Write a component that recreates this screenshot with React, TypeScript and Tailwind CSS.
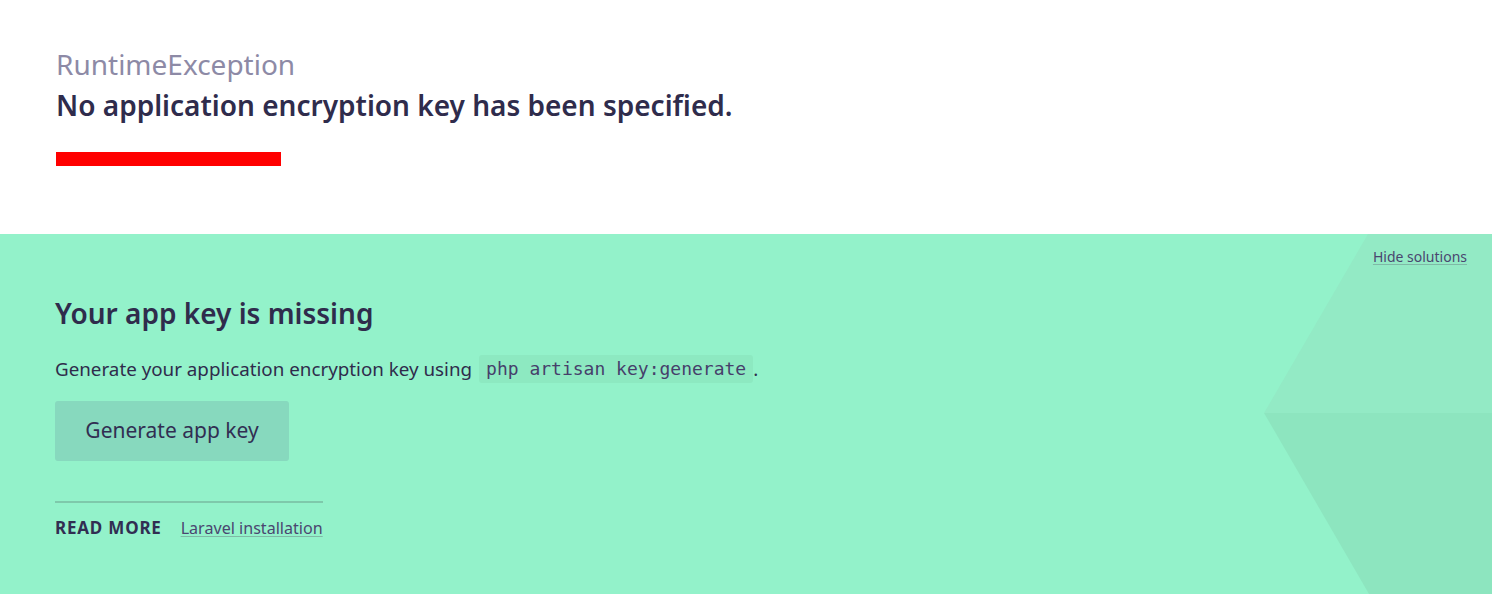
import React from 'react';

const sans = 'font-["Noto_Sans","Open_Sans",sans-serif]';

function Decoration() {
  // background facets on the right edge of the solution panel
  return (
    <svg
      className="absolute right-0 top-0 h-full"
      width="228"
      height="360"
      viewBox="0 0 228 360"
      preserveAspectRatio="none"
    >
      <polygon points="104,0 228,0 228,179 0,179" fill="#93eac5" />
      <polygon points="0,179 228,179 228,360 105,360" fill="#8de5bf" />
    </svg>
  );
}

export default function App() {
  return (
    <div className={`${sans} min-h-[594px] w-full bg-white`}>
      <header className="h-[234px] px-14 pt-[46px]">
        <p className="text-[28px] leading-[36px] text-[#8d8aa6]">RuntimeException</p>
        <h1 className="text-[28px] leading-[46px] font-semibold text-[#2f2c4c]">
          No application encryption key has been specified.
        </h1>
        <div className="mt-[24px] h-[14px] w-[225px] bg-[#ff0000]" />
      </header>

      <section className="relative h-[360px] overflow-hidden bg-[#93f2ca]">
        <Decoration />
        <a className="absolute right-[25px] top-[12px] text-[14px] text-[#4a4670] underline decoration-[#7fb9a6] underline-offset-2">
          Hide solutions
        </a>

        <div className="relative px-[55px] pt-[60px]">
          <h2 className="text-[28px] leading-[38px] font-semibold text-[#2f2c4c]">Your app key is missing</h2>
          <p className="mt-[23px] flex items-center text-[18.8px] text-[#2f2c4c]">
            Generate your application encryption key using
            <code className='ml-[7px] rounded-[3px] bg-[#8de9c1] px-[7px] py-[2px] font-["DejaVu_Sans_Mono",monospace] text-[18px] leading-[24px] text-[#463f6b]'>
              php artisan key:generate
            </code>
            <span>.</span>
          </p>
          <button className="mt-[18px] h-[60px] w-[234px] rounded-[3px] bg-[#87d9be] text-[21px] text-[#312e52]">
            Generate app key
          </button>
          <div className="mt-[40px] flex w-fit items-center gap-[19px] whitespace-nowrap border-t-2 border-[#7ec9ab] pt-[12px]">
            <span className="text-[17px] font-bold tracking-[0.8px] text-[#312e52]">READ MORE</span>
            <a className="text-[16.1px] text-[#4a4670] underline decoration-[#7fb9a6] underline-offset-2">
              Laravel installation
            </a>
          </div>
        </div>
      </section>
    </div>
  );
}
